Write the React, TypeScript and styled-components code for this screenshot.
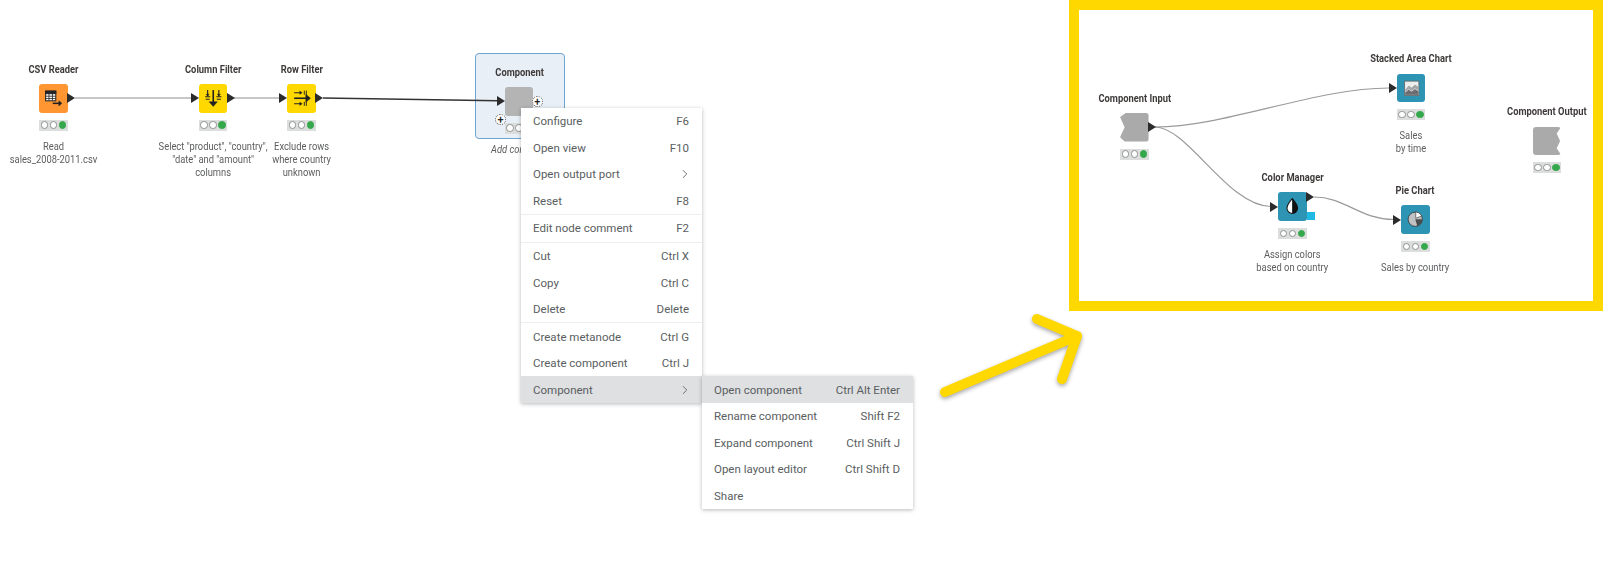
import React from "react";
import styled, { createGlobalStyle } from "styled-components";
import { ChevronRight } from "lucide-react";

const GlobalStyle = createGlobalStyle`
  html, body {
    margin: 0;
    background: #fff;
  }
`;

const Canvas = styled.div`
  position: relative;
  width: 1603px;
  height: 564px;
  overflow: hidden;
  font-family: Roboto, "Liberation Sans", sans-serif;
`;

const Wires = styled.svg`
  position: absolute;
  left: 0;
  top: 0;
`;

const ZoomPanel = styled.div`
  position: absolute;
  left: 1069px;
  top: 0;
  width: 534px;
  height: 311px;
  box-sizing: border-box;
  border: 10px solid #ffd800;
`;

const ComponentFrame = styled.div`
  position: absolute;
  left: 475px;
  top: 53px;
  width: 90px;
  height: 86px;
  box-sizing: border-box;
  background: #e8eff6;
  border: 1.5px solid #6ea5d0;
  border-radius: 4px;
`;

const Node = styled.div<{ $center: number; $top: number }>`
  position: absolute;
  left: ${(p) => p.$center - 70}px;
  top: ${(p) => p.$top - 20.5}px;
  width: 140px;
  display: flex;
  flex-direction: column;
  align-items: center;
`;

const Title = styled.div`
  height: 12px;
  margin-bottom: 8.5px;
  font-size: 11px;
  line-height: 12px;
  font-weight: 700;
  color: #3e3a39;
  white-space: nowrap;
  transform: scaleX(0.85);
`;

const Body = styled.div<{ $color: string; $notch?: "left" | "right" }>`
  width: 28.5px;
  height: 28.5px;
  background: ${(p) => p.$color};
  border-radius: 3px;
  ${(p) =>
    p.$notch === "left" &&
    "clip-path: polygon(20% 0, 96% 0, 100% 4%, 100% 96%, 96% 100%, 16% 100%, 0 85%, 16% 50%, 0 14%);"}
  ${(p) =>
    p.$notch === "right" &&
    "clip-path: polygon(4% 0, 100% 0, 84% 24%, 96% 50%, 84% 76%, 100% 100%, 4% 100%, 0 96%, 0 4%);"}
  svg {
    display: block;
  }
`;

const BodyWrap = styled.div`
  position: relative;
  width: 28.5px;
  height: 28.5px;
`;

const Port = styled.span<{ $side: "in" | "out"; $y?: number }>`
  position: absolute;
  ${(p) => (p.$side === "in" ? "left: -8px;" : "right: -7.5px;")}
  top: ${(p) => p.$y ?? 14.25}px;
  margin-top: -5px;
  width: 0;
  height: 0;
  border-top: 5px solid transparent;
  border-bottom: 5px solid transparent;
  border-left: 8px solid #2b2b2b;
`;

const FlowPort = styled.span`
  position: absolute;
  left: 28.5px;
  top: 20px;
  width: 8px;
  height: 8px;
  background: #1fb9e3;
`;

const PlusPort = styled.span<{ $x: number; $y: number }>`
  position: absolute;
  left: ${(p) => p.$x}px;
  top: ${(p) => p.$y}px;
  width: 11px;
  height: 11px;
  box-sizing: border-box;
  border: 1px dotted #555;
  border-radius: 50%;
  background: #fff;
  color: #222;
  display: flex;
  align-items: center;
  justify-content: center;
  font-size: 11px;
  font-weight: 500;
  line-height: 1;
`;

const Status = styled.div`
  margin-top: 7px;
  width: 28.5px;
  height: 11px;
  background: #dcdddd;
  display: flex;
  align-items: center;
  justify-content: space-between;
  padding: 0 1.5px;
  box-sizing: border-box;
`;

const Light = styled.span<{ $on?: boolean }>`
  width: 7.5px;
  height: 7.5px;
  box-sizing: border-box;
  border-radius: 50%;
  background: ${(p) => (p.$on ? "#34a84a" : "#fff")};
  border: 1px solid ${(p) => (p.$on ? "#34a84a" : "#8f9090")};
`;

const Description = styled.div<{ $italic?: boolean }>`
  margin-top: 9px;
  font-size: 11px;
  line-height: 13.3px;
  font-style: ${(p) => (p.$italic ? "italic" : "normal")};
  color: #5c5d5f;
  text-align: center;
  white-space: pre;
  transform: scaleX(0.85);
`;

const Menu = styled.div`
  position: absolute;
  left: 521px;
  top: 108px;
  width: 181px;
  background: #fff;
  box-shadow: 0 1px 4px rgba(0, 0, 0, 0.28);
  color: #5a5e61;
  font-size: 11.5px;
`;

const Group = styled.div`
  & + & {
    border-top: 1px solid #eeeeee;
  }
`;

const Row = styled.div<{ $active?: boolean }>`
  position: relative;
  height: 26.55px;
  box-sizing: border-box;
  padding: 0 13px 0 12px;
  display: flex;
  align-items: center;
  justify-content: space-between;
  background: ${(p) => (p.$active ? "#dfe0e2" : "transparent")};
  white-space: nowrap;
`;

const Chevron = styled(ChevronRight)`
  margin-right: -3px;
`;

const SubMenu = styled.div`
  position: absolute;
  left: 100%;
  top: 0;
  width: 211px;
  background: #fff;
  box-shadow: 0 1px 4px rgba(0, 0, 0, 0.28);
`;

const BigArrow = styled.svg`
  position: absolute;
  left: 930px;
  top: 300px;
  overflow: visible;
  filter: drop-shadow(0 2px 2px rgba(0, 0, 0, 0.35));
`;

const csvIcon = (
  <svg width="28.5" height="28.5" viewBox="0 0 28 28" fill="none" stroke="#222">
    <rect x="6.5" y="7" width="10" height="9.5" fill="#fff" strokeWidth="1" />
    <rect x="6.5" y="7" width="10" height="2.5" fill="#222" strokeWidth="1" />
    <path d="M9.8 9.5v7M13.2 9.5v7M6.5 12h10M6.5 14.3h10" strokeWidth="0.8" />
    <path d="M13.5 19h7" strokeWidth="1.5" />
    <path d="M19.5 16.5l3 2.5-3 2.5z" fill="#222" strokeWidth="0.5" />
  </svg>
);

const columnFilterIcon = (
  <svg width="28.5" height="28.5" viewBox="0 0 28 28" fill="none" stroke="#222">
    <path d="M14 6v13" strokeWidth="1.6" />
    <path d="M10 17.5h8l-4 4.5z" fill="#222" strokeWidth="0.5" />
    <path d="M8.5 6v6M19.5 6v6" strokeWidth="1.1" />
    <path d="M6 12.5h5M17 12.5h5M6.5 15h4M17.5 15h4" strokeWidth="1" />
    <path d="M7 10h3l-1.5 2zM18 10h3l-1.5 2z" fill="#222" strokeWidth="0.4" />
  </svg>
);

const rowFilterIcon = (
  <svg width="28.5" height="28.5" viewBox="0 0 28 28" fill="none" stroke="#222">
    <path d="M7 14h13" strokeWidth="1.6" />
    <path d="M18.5 10l4.5 4-4.5 4z" fill="#222" strokeWidth="0.5" />
    <path d="M7 8.5h7M7 19.5h7" strokeWidth="1" />
    <path d="M12.5 6.8l2.5 1.7-2.5 1.7zM12.5 17.8l2.5 1.7-2.5 1.7z" fill="#222" strokeWidth="0.3" />
    <path d="M17 6.5v4M19 6.5v4M17 17.5v4M19 17.5v4" strokeWidth="0.9" />
  </svg>
);

const areaIcon = (
  <svg width="28.5" height="28.5" viewBox="0 0 28 28" fill="none">
    <rect x="7.5" y="7" width="14" height="14" fill="#eceded" stroke="#666" strokeWidth="0.8" />
    <path d="M8 15l3.5-4 3 2 3-3 3.5 2v8.500H8z" fill="#a4a6a8" />
    <path d="M8 18l3.500-3 3 2 3-2.500 3.500 2v4H8z" fill="#6a6c6f" />
    <path d="M8 15l3.5-4 3 2 3-3 3.5 2M8 18l3.500-3 3 2 3-2.500 3.500 2" stroke="#fff" strokeWidth="0.6" />
  </svg>
);

const dropIcon = (
  <svg width="28.5" height="28.5" viewBox="0 0 28 28">
    <path d="M14 6.500c-3.500 4-5.200 6.700-5.200 9.400a5.200 5.200 0 0 0 5.200 5.200z" fill="#fff" />
    <path d="M14 6.500c3.500 4 5.200 6.700 5.200 9.400a5.200 5.200 0 0 1-5.200 5.200z" fill="#111" />
    <path d="M14 6.500c-3.500 4-5.200 6.700-5.200 9.400a5.200 5.200 0 0 0 10.400 0c0-2.700-1.700-5.400-5.200-9.400z" fill="none" stroke="#111" strokeWidth="1" />
  </svg>
);

const pieIcon = (
  <svg width="28.5" height="28.5" viewBox="0 0 28 28">
    <circle cx="14" cy="14" r="7" fill="#bfc1c3" stroke="#333" strokeWidth="0.8" />
    <path d="M14 14l7 0a7 7 0 0 1-5 6.700z" fill="#4a4c4e" />
    <path d="M14.500 13V6.800a7 7 0 0 1 5.800 4z" fill="#fff" stroke="#333" strokeWidth="0.6" />
  </svg>
);

const Lights = () => (
  <Status>
    <Light />
    <Light />
    <Light $on />
  </Status>
);

type KnimeNodeProps = {
  title: string;
  center: number;
  top: number;
  color: string;
  icon?: React.ReactNode;
  notch?: "left" | "right";
  desc?: string;
  italic?: boolean;
  portIn?: boolean;
  portOut?: boolean;
  outY?: number;
  flow?: boolean;
  children?: React.ReactNode;
};

const KnimeNode = ({ title, center, top, color, icon, notch, desc, italic, portIn, portOut, outY, flow, children }: KnimeNodeProps) => (
  <Node $center={center} $top={top}>
    <Title>{title}</Title>
    <BodyWrap>
      <Body $color={color} $notch={notch}>
        {icon}
      </Body>
      {portIn && <Port $side="in" />}
      {portOut && <Port $side="out" $y={outY} />}
      {flow && <FlowPort />}
      {children}
    </BodyWrap>
    <Lights />
    {desc && <Description $italic={italic}>{desc}</Description>}
  </Node>
);

const mainItems = [
  [
    ["Configure", "F6"],
    ["Open view", "F10"],
    ["Open output port", ">"],
    ["Reset", "F8"],
  ],
  [["Edit node comment", "F2"]],
  [
    ["Cut", "Ctrl X"],
    ["Copy", "Ctrl C"],
    ["Delete", "Delete"],
  ],
  [
    ["Create metanode", "Ctrl G"],
    ["Create component", "Ctrl J"],
  ],
];

const subItems = [
  ["Open component", "Ctrl Alt Enter"],
  ["Rename component", "Shift F2"],
  ["Expand component", "Ctrl Shift J"],
  ["Open layout editor", "Ctrl Shift D"],
  ["Share", ""],
];

export default function App() {
  return (
    <>
      <GlobalStyle />
      <Canvas>
        <ZoomPanel />
        <ComponentFrame />

        <Wires width="1603" height="564" fill="none">
          <path d="M75 98H191M234 98H280" stroke="#b5b5b5" strokeWidth="1.5" />
          <path d="M323 98L498 100.700" stroke="#333" strokeWidth="1.5" />
          <path d="M1155 127C1225 127 1315 88 1389 88" stroke="#9a9a9a" strokeWidth="1.2" />
          <path d="M1155 127C1188 127 1228 206.500 1271 206.500" stroke="#9a9a9a" strokeWidth="1.2" />
          <path d="M1314 197C1345 197 1360 219.500 1394 219.500" stroke="#9a9a9a" strokeWidth="1.2" />
        </Wires>

        <KnimeNode title="CSV Reader" center={53.7} top={84} color="#ff9632" icon={csvIcon} portOut desc={"Read\nsales_2008-2011.csv"} />
        <KnimeNode title="Column Filter" center={213.2} top={84} color="#ffd800" icon={columnFilterIcon} portIn portOut desc={'Select "product", "country",\n"date" and "amount"\ncolumns'} />
        <KnimeNode title="Row Filter" center={301.7} top={84} color="#ffd800" icon={rowFilterIcon} portIn portOut desc={"Exclude rows\nwhere country\nunknown"} />

        <KnimeNode title="Component" center={519.2} top={87} color="#b4b4b4" portIn desc="Add comment" italic>
          <PlusPort $x={26.8} $y={8.5}>+</PlusPort>
          <PlusPort $x={-9.8} $y={26.8}>+</PlusPort>
        </KnimeNode>

        <KnimeNode title="Component Input" center={1134.3} top={113} color="#aaaaaa" notch="left" portOut />
        <KnimeNode title="Stacked Area Chart" center={1411} top={73.7} color="#2d94b3" icon={areaIcon} portIn desc={"Sales\nby time"} />
        <KnimeNode title="Color Manager" center={1292.6} top={192.3} color="#2d94b3" icon={dropIcon} portIn portOut outY={4.7} flow desc={"Assign colors\nbased on country"} />
        <KnimeNode title="Pie Chart" center={1415.3} top={205.3} color="#2d94b3" icon={pieIcon} portIn desc={"Sales by country"} />
        <KnimeNode title="Component Output" center={1547} top={126.7} color="#aaaaaa" notch="right" />

        <BigArrow width="150" height="100" fill="none" stroke="#ffd800" strokeWidth="10" strokeLinecap="round" strokeLinejoin="round">
          <path d="M15 92L147 36M107 19L147 36L132 79" />
        </BigArrow>

        <Menu>
          {mainItems.map((group, i) => (
            <Group key={i}>
              {group.map(([label, shortcut]) => (
                <Row key={label}>
                  <span>{label}</span>
                  {shortcut === ">" ? <Chevron size={14} strokeWidth={1.5} /> : <span>{shortcut}</span>}
                </Row>
              ))}
              {i === mainItems.length - 1 && (
                <Row $active>
                  <span>Component</span>
                  <Chevron size={14} strokeWidth={1.5} />
                  <SubMenu>
                    {subItems.map(([label, shortcut], j) => (
                      <Row key={label} $active={j === 0}>
                        <span>{label}</span>
                        <span>{shortcut}</span>
                      </Row>
                    ))}
                  </SubMenu>
                </Row>
              )}
            </Group>
          ))}
        </Menu>
      </Canvas>
    </>
  );
}
